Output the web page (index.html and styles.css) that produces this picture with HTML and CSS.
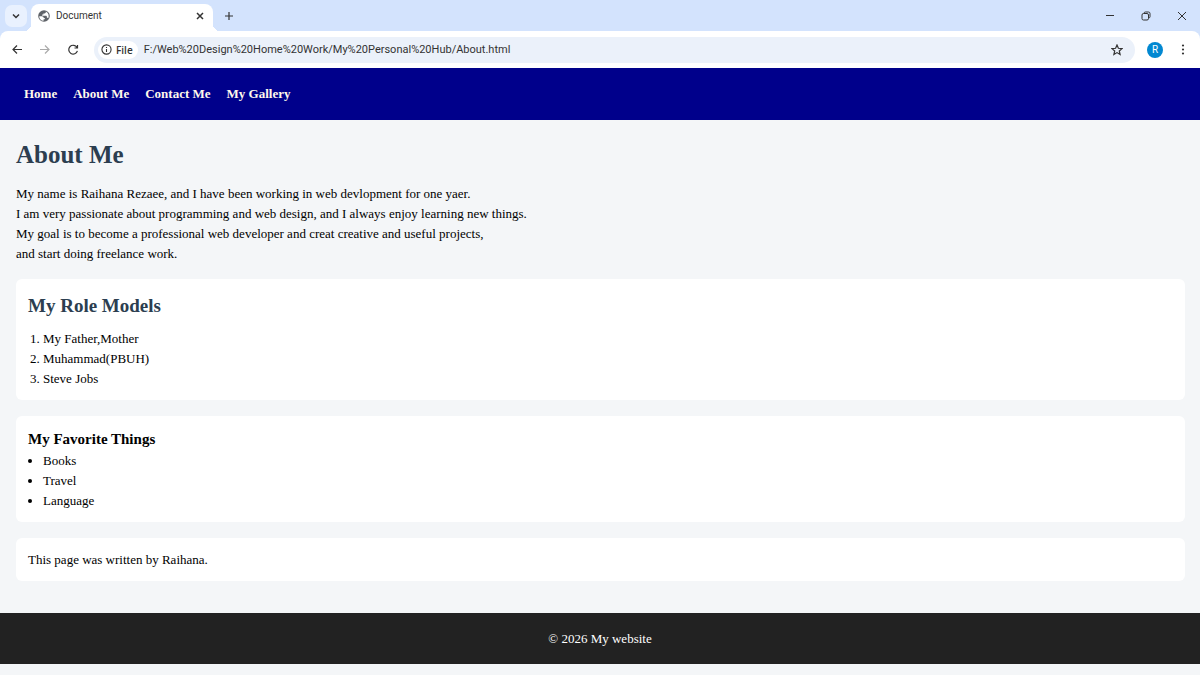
FILE: index.html
```html
<!DOCTYPE html>
<html lang="en">
<head>
    <meta charset="UTF-8">
    <meta name="viewport" content="width=device-width, initial-scale=1.0">
    <title>Document</title>
    <link rel="stylesheet" href="styles.css">
</head>
<body>
    <div class="browser">
        <div class="tab-bar">
            <button class="tab-search" aria-label="Search tabs">
                <svg width="8" height="8" viewBox="0 0 8 8"><path d="M1 2.5l3 3 3-3"/></svg>
            </button>
            <div class="tab">
                <svg class="globe" width="12" height="12" viewBox="0 0 12 12">
                    <circle cx="6" cy="6" r="5.8"/>
                    <path d="M1.2 6.2h2.6c1.3 0 1.9.8 1.9 1.8h1.1v1.2H5.6v1.6C3.2 10.7 1.1 8.9 1.2 6.2zM7.8 1.5v.7c0 .7-.5 1.2-1.2 1.2H5.4v1.2H4.2v1.1h3.6c.7 0 1.1.5 1.1 1.1v1h.7l.7.5c1-2.6.2-5.6-2.5-6.8z"/>
                </svg>
                <span class="tab-title">Document</span>
                <button class="tab-close" aria-label="Close tab">
                    <svg width="8" height="8" viewBox="0 0 8 8"><path d="M1 1l6 6M7 1L1 7"/></svg>
                </button>
            </div>
            <button class="new-tab" aria-label="New tab">
                <svg width="10" height="10" viewBox="0 0 10 10"><path d="M5 1v8M1 5h8"/></svg>
            </button>
            <div class="window-buttons">
                <button aria-label="Minimize"><svg width="10" height="10" viewBox="0 0 10 10"><path d="M1 4.5h8"/></svg></button>
                <button aria-label="Restore"><svg width="10" height="10" viewBox="0 0 10 10"><rect x="1" y="2.5" width="6.5" height="6.5" rx="1.5"/><path d="M3 2.3C3 1.5 3.5 1 4.3 1H7.5Q9 1 9 2.5v3.2c0 .8-.5 1.3-1.3 1.3"/></svg></button>
                <button aria-label="Close"><svg width="10" height="10" viewBox="0 0 10 10"><path d="M1 1l8 8M9 1L1 9"/></svg></button>
            </div>
        </div>
        <div class="toolbar">
            <div class="tools">
                <button aria-label="Back"><svg width="12" height="12" viewBox="0 0 12 12"><path d="M11 5.5H2M6 1.5L2 5.5l4 4"/></svg></button>
                <button class="off" aria-label="Forward"><svg width="12" height="12" viewBox="0 0 12 12"><path d="M1 5.5h9M6 1.5l4 4-4 4"/></svg></button>
                <button aria-label="Reload"><svg width="12" height="12" viewBox="0 0 12 12"><path d="M10 3.5A4.4 4.4 0 1 0 10.4 6.8M10.5 1v3H7.5"/></svg></button>
            </div>
            <div class="address">
                <button class="file-chip">
                    <svg width="11" height="11" viewBox="0 0 12 12"><circle cx="6" cy="6" r="5"/><path d="M6 5.4v3.2M6 3.2v1.2"/></svg>
                    File
                </button>
                <input class="url" type="text" aria-label="Address" value="F:/Web%20Design%20Home%20Work/My%20Personal%20Hub/About.html">
                <button class="star" aria-label="Bookmark"><svg width="12" height="12" viewBox="0 0 12 12"><path d="M6 1l1.4 3.3 3.6.3-2.7 2.4.8 3.5L6 8.6l-3.1 1.9.8-3.5L1 4.6l3.600-.3z"/></svg></button>
            </div>
            <button class="profile" aria-label="Profile">R</button>
            <button class="more" aria-label="Menu"><svg width="4" height="12" viewBox="0 0 4 12"><circle cx="2" cy="1.5" r="1.1"/><circle cx="2" cy="5.5" r="1.1"/><circle cx="2" cy="9.5" r="1.1"/></svg></button>
        </div>
    </div>

    <nav>
        <a href="#">Home</a>
        <a href="#">About Me</a>
        <a href="#">Contact Me</a>
        <a href="#">My Gallery</a>
    </nav>

    <main>
        <h1>About Me</h1>
        <p class="intro">
            My name is Raihana Rezaee, and I have been working in web devlopment for one yaer.<br>
            I am very passionate about programming and web design, and I always enjoy learning new things.<br>
            My goal is to become a professional web developer and creat creative and useful projects,<br>
            and start doing freelance work.
        </p>

        <section>
            <h2>My Role Models</h2>
            <ol>
                <li>My Father,Mother</li>
                <li>Muhammad(PBUH)</li>
                <li>Steve Jobs</li>
            </ol>
        </section>

        <section>
            <h3>My Favorite Things</h3>
            <ul>
                <li>Books</li>
                <li>Travel</li>
                <li>Language</li>
            </ul>
        </section>

        <section>
            <p>This page was written by Raihana.</p>
        </section>
    </main>

    <footer>
        <p>© 2026 My website</p>
    </footer>
</body>
</html>
```
FILE: styles.css
```css
* {
    box-sizing: border-box;
    margin: 0;
    padding: 0;
}
body {
    font-family: "Liberation Serif", "Times New Roman", serif;
    font-size: 13px;
    line-height: 20px;
    color: #000;
    background-color: #f4f6f8;
}

/* Browser window */
.browser {
    font-family: Roboto, "Open Sans", sans-serif;
    font-size: 10px;
    color: #333;
    background-color: #d3e3fd;
}
.browser button {
    display: flex;
    align-items: center;
    justify-content: center;
    border: none;
    background: none;
    font: inherit;
    color: inherit;
}
.browser svg {
    flex: none;
    fill: none;
    stroke: #333;
    stroke-width: 1.2;
}
.tab-bar {
    display: flex;
    align-items: center;
    height: 31px;
    padding-left: 5px;
}
.browser .tab-search {
    width: 22px;
    height: 22px;
    border-radius: 7px;
    background-color: #e9f1fe;
}
.tab-search svg, .tab-close svg {
    stroke-width: 1.5;
}
.tab {
    position: relative;
    display: flex;
    align-items: center;
    gap: 6px;
    align-self: stretch;
    width: 182px;
    margin: 4px 0 0 4px;
    padding: 0 9px 4px 7px;
    border-radius: 8px 8px 0 0;
    background-color: #fff;
}
.tab::before, .tab::after {
    content: "";
    position: absolute;
    bottom: 0;
    width: 7px;
    height: 7px;
}
.tab::before {
    right: 100%;
    background: radial-gradient(circle at 0 0, transparent 7px, #fff 7px);
}
.tab::after {
    left: 100%;
    background: radial-gradient(circle at 100% 0, transparent 7px, #fff 7px);
}
.globe circle {
    fill: #5f6368;
    stroke: none;
}
.globe path {
    fill: #fff;
    stroke: none;
}
.tab-title {
    flex: 1;
}
.browser .new-tab {
    margin-left: 11px;
}
.window-buttons {
    display: flex;
    gap: 26px;
    margin-left: auto;
    padding-right: 13px;
}
.window-buttons svg {
    stroke-width: 1;
}
.toolbar {
    display: flex;
    align-items: center;
    height: 37px;
    padding: 0 15px 0 11px;
    border-radius: 8px 8px 0 0;
    background-color: #fff;
}
.tools {
    display: flex;
    gap: 16px;
    margin-right: 15px;
}
.tools .off svg {
    stroke: #aaa;
}
.address {
    flex: 1;
    display: flex;
    align-items: center;
    height: 26px;
    padding: 0 12px 0 4px;
    border-radius: 13px;
    background-color: #ebf1fa;
}
.browser .file-chip {
    gap: 4px;
    height: 18px;
    padding: 0 5px 0 3px;
    border-radius: 9px;
    background-color: #fff;
    font-family: "Open Sans", sans-serif;
    font-weight: 600;
}
.url {
    flex: 1;
    margin-left: 6px;
    border: none;
    background: none;
    font: inherit;
    font-size: 11px;
    color: inherit;
}
.browser .profile {
    width: 16px;
    height: 16px;
    margin-left: 12px;
    border-radius: 50%;
    background-color: #0288d1;
    color: #fff;
}
.browser .more {
    margin-left: 18px;
}
.more svg {
    fill: #333;
    stroke: none;
}

/* Page */
nav {
    display: flex;
    gap: 16px;
    padding: 16px 24px;
    background-color: #00008b;
}
nav a {
    color: #fff8eb;
    font-weight: bold;
    text-decoration: none;
}
main {
    padding: 15px 15px 32px 16px;
}
h1, h2 {
    color: #2c3e50;
}
h1 {
    font-size: 25px;
    line-height: 40px;
}
h2 {
    margin-bottom: 8px;
    font-size: 19px;
    line-height: 30px;
}
h3 {
    margin-bottom: 1px;
    font-size: 15px;
    line-height: 22px;
}
.intro {
    margin: 9px 0 15px;
}
section {
    margin-bottom: 16px;
    padding: 12px 12px 11px;
    border-radius: 6px;
    background-color: #fff;
}
section:last-child {
    margin-bottom: 0;
}
ol, ul {
    padding-left: 15px;
}
footer {
    padding: 16px 15px 15px;
    background-color: #222;
    color: #fff;
    text-align: center;
}
```
